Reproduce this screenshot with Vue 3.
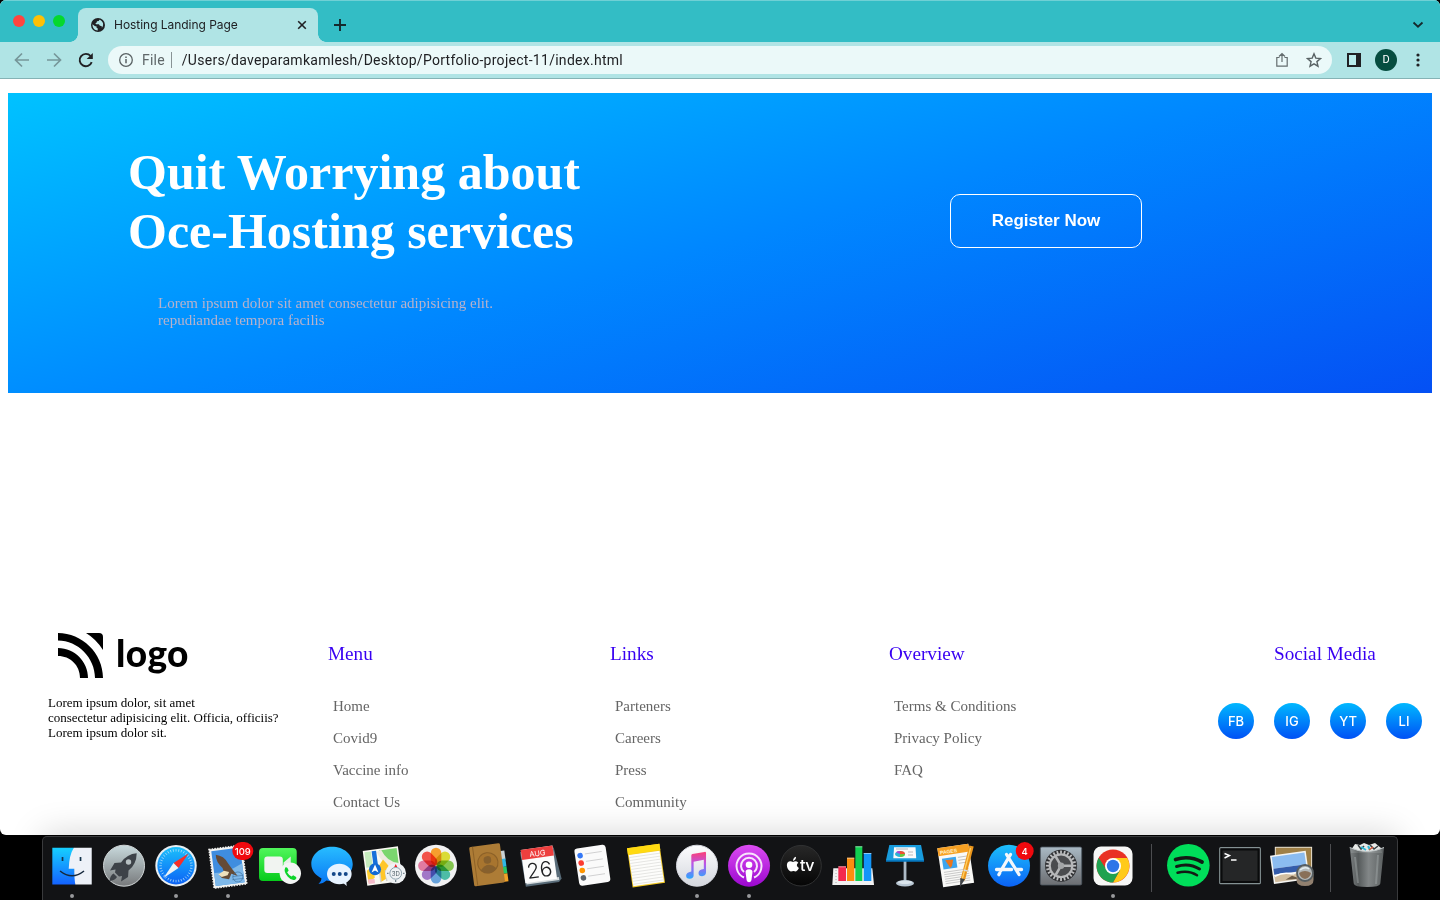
<script setup>
const columns = [
  { title: 'Menu', items: ['Home', 'Covid9', 'Vaccine info', 'Contact Us'] },
  { title: 'Links', items: ['Parteners', 'Careers', 'Press', 'Community'] },
  { title: 'Overview', items: ['Terms & Conditions', 'Privacy Policy', 'FAQ'] },
]
const socials = ['FB', 'IG', 'YT', 'LI']
const petals = ['#f7981d', '#d8d926', '#7cc242', '#3fb8a0', '#5b9bd9', '#9a6cc4', '#e0709a', '#f2453d']
const ticks = Array.from({ length: 36 }, (_, i) => i * 10)
const teeth = Array.from({ length: 24 }, (_, i) => i * 15)
const dotColors = ['#3478f6', '#fb3b30', '#ff9500', '#5b626a']
</script>

<template>
  <div class="desktop">
    <div class="window">
      <header class="tabstrip">
        <div class="lights"><i class="red"></i><i class="yellow"></i><i class="green"></i></div>
        <div class="tab">
          <svg class="globe" width="14" height="14" viewBox="0 0 14 14"><circle cx="7" cy="7" r="7" fill="#202124"/><path d="M1.5 6.2 4 8.2l1.4.1.3 1.6 1 .4v2.2C3.600 12.300 1.300 9.900 1.500 6.200ZM8.300 1.700 7.800 3 6 3.300 5.500 4.700 4.400 5.300 5 6.300h2.900l1 1.500 1.700.2.300 1.800c2.100-2.600 1.700-6.800-2.600-8.100Z" fill="#b0e4e5"/></svg>
          <span class="tabname">Hosting Landing Page</span>
          <svg width="10" height="10" viewBox="0 0 10 10"><path d="M1.200 1.200 8.800 8.800M8.800 1.200 1.200 8.800" stroke="#202124" stroke-width="1.600"/></svg>
        </div>
        <svg class="plus" width="12" height="12" viewBox="0 0 12 12"><path d="M6 0v12M0 6h12" stroke="#15292c" stroke-width="1.900"/></svg>
        <svg class="chevron" width="12" height="8" viewBox="0 0 12 8"><path d="M1.500 1.500 6 5.700l4.500-4.200" fill="none" stroke="#15292c" stroke-width="1.800"/></svg>
      </header>
      <div class="toolbar">
        <svg class="nav" width="16" height="16" viewBox="0 0 16 16"><path d="M15 8H2M8 1.500 1.500 8 8 14.500" fill="none" stroke="#769699" stroke-width="1.700"/></svg>
        <svg class="nav" width="16" height="16" viewBox="0 0 16 16"><path d="M1 8h13M8 1.500 14.500 8 8 14.500" fill="none" stroke="#769699" stroke-width="1.700"/></svg>
        <svg class="nav" width="16" height="16" viewBox="0 0 16 16"><path d="M13.700 10.200A6.200 6.200 0 1 1 12.600 4" fill="none" stroke="#202124" stroke-width="1.900"/><path d="M14.800 1v6H8.700Z" fill="#202124"/></svg>
        <div class="omnibox">
          <svg width="14" height="14" viewBox="0 0 14 14"><circle cx="7" cy="7" r="6.300" fill="none" stroke="#5a6264" stroke-width="1.300"/><path d="M7 6v4.300M7 3.500v1.500" stroke="#5a6264" stroke-width="1.500"/></svg>
          <span class="scheme">File</span><i class="bar"></i><span class="url">/Users/daveparamkamlesh/Desktop/Portfolio-project-11/index.html</span>
          <svg class="share" width="14" height="16" viewBox="0 0 14 16"><path d="M4.500 5.500H1.800v8.700h10.400V5.500H9.500M7 10V1.800M4 4.500l3-3 3 3" fill="none" stroke="#646d6f" stroke-width="1.200"/></svg>
          <svg width="16" height="16" viewBox="0 0 16 16"><path d="m8 1.800 1.800 4.300 4.700.4-3.600 3.100 1.100 4.600L8 11.800l-4 2.400 1.100-4.600L1.500 6.500l4.700-.4Z" fill="none" stroke="#596365" stroke-width="1.400"/></svg>
        </div>
        <svg class="panel" width="14" height="14" viewBox="0 0 14 14"><path fill="#202124" d="M0 0h14v14H0Z"/><path fill="#b9ecec" d="M2 2h7v10H2Z"/></svg>
        <span class="avatar">D</span>
        <svg class="kebab" width="4" height="14" viewBox="0 0 4 14"><g fill="#202124"><circle cx="2" cy="2" r="1.600"/><circle cx="2" cy="7" r="1.600"/><circle cx="2" cy="12" r="1.600"/></g></svg>
      </div>

      <main>
        <section class="hero">
          <div class="copy">
            <h1>Quit Worrying about<br><span>Oce-Hosting services</span></h1>
            <p>Lorem ipsum dolor sit amet consectetur adipisicing elit.<br>repudiandae tempora facilis</p>
          </div>
          <button>Register Now</button>
        </section>
        <footer>
          <div class="brand">
            <div class="logo">
              <svg width="45" height="45" viewBox="0 0 45 45"><path d="M28 0h13q4 0 4 4v13Q38 6 28 0ZM0 0c24 0 45 20 45 45h-8C37 25 20 7.500 0 7.500ZM0 15c17 0 30 14 30 30h-8C22 32 12 23 0 23Z"/></svg>
              <span>logo</span>
            </div>
            <p>Lorem ipsum dolor, sit amet<br>consectetur adipisicing elit. Officia, officiis?<br>Lorem ipsum dolor sit.</p>
          </div>
          <div v-for="c in columns" :key="c.title" class="col">
            <h3>{{ c.title }}</h3>
            <ul><li v-for="i in c.items" :key="i">{{ i }}</li></ul>
          </div>
          <div class="social">
            <h3>Social Media</h3>
            <div class="circles"><span v-for="s in socials" :key="s">{{ s }}</span></div>
          </div>
        </footer>
      </main>
    </div>

    <nav class="dock">
      <svg class="defs" width="0" height="0"><defs>
        <linearGradient id="gBlue" x2="0" y2="1"><stop stop-color="#16d0ff"/><stop offset="1" stop-color="#1462ff"/></linearGradient>
        <linearGradient id="gSky" x2="0" y2="1"><stop stop-color="#1cc0fb"/><stop offset="1" stop-color="#0b62f6"/></linearGradient>
        <linearGradient id="gGrey" x2="0" y2="1"><stop stop-color="#c9dadd"/><stop offset="1" stop-color="#77797b"/></linearGradient>
        <linearGradient id="gWhite" x2="0" y2="1"><stop stop-color="#fdfdfe"/><stop offset="1" stop-color="#d4d7de"/></linearGradient>
        <linearGradient id="gGreen" x2="0" y2="1"><stop stop-color="#50f65b"/><stop offset="1" stop-color="#06cb1b"/></linearGradient>
        <linearGradient id="gMsg" x2="0" y2="1"><stop stop-color="#28bdff"/><stop offset="1" stop-color="#0877f5"/></linearGradient>
        <linearGradient id="gNote" x2="0" y2="1"><stop stop-color="#fc3f75"/><stop offset=".45" stop-color="#ba55e9"/><stop offset="1" stop-color="#29a7ff"/></linearGradient>
        <linearGradient id="gPod" x2="0" y2="1"><stop stop-color="#dc4cf2"/><stop offset="1" stop-color="#9b08cf"/></linearGradient>
        <linearGradient id="gTv" x2="0" y2="1"><stop stop-color="#282828"/><stop offset="1" stop-color="#050505"/></linearGradient>
        <linearGradient id="gSet" x2="0" y2="1"><stop stop-color="#a9b9c4"/><stop offset="1" stop-color="#6c6e72"/></linearGradient>
        <linearGradient id="gCan"><stop stop-color="#858a8b"/><stop offset=".25" stop-color="#5c6162"/><stop offset=".55" stop-color="#8c9192"/><stop offset="1" stop-color="#626768"/></linearGradient>
      </defs></svg>

      <!-- Finder -->
      <svg class="app" viewBox="0 0 52 62"><path fill="url(#gBlue)" d="M6.300 9.700h21.500l1.500 36.800h-23Z"/><path fill="#edf1f8" d="M27.800 9.700h17.900v36.800H29.300q-1-5-1.100-15.700h-5.500q.3-13.500 5.100-21.100Z"/><path d="M16.500 19v4M34.500 19v4" stroke="#15344d" stroke-width="1.700"/><path d="M14 33q12 9.500 24 0" fill="none" stroke="#16283d" stroke-width="1.500"/><circle class="run" cx="26" cy="58" r="2"/></svg>
      <!-- Launchpad -->
      <svg class="app" viewBox="0 0 52 62"><circle cx="26" cy="27.700" r="20.500" fill="url(#gGrey)" stroke="#d0d5d6"/><path fill="#3d4248" d="M38.700 15.300Q29 16 23 24.500l-6.500.500-4.500 7.500 5.500-1-.5 3 4 4 3-.5-1 5.500 7-4.500.5-6.500q8-6 8.200-17.200ZM15.500 35.500q-3.500 2-4 7.500 5.500-.5 7.500-4Z"/><circle cx="30.500" cy="24" r="2.700" fill="#b7c0c2"/></svg>
      <!-- Safari -->
      <svg class="app" viewBox="0 0 52 62"><circle cx="26" cy="27.700" r="20.700" fill="#e8eef1"/><circle cx="26" cy="27.700" r="18.700" fill="url(#gSky)"/><path v-for="t in ticks" :key="t" d="M26 11v2.500" stroke="#b9e2fa" stroke-width=".7" :transform="`rotate(${t} 26 27.700)`"/><path fill="#f82e28" d="M38.500 15.500 23.500 25l5 5Z"/><path fill="#eef2f4" d="M13.500 40 23.500 25l5 5Z"/><circle class="run" cx="26" cy="58" r="2"/></svg>
      <!-- Mail -->
      <svg class="app" viewBox="0 0 52 62"><g transform="translate(7 11.500) rotate(-7.500)"><rect width="33" height="39" fill="#f3f3f1" stroke="#f3f3f1" stroke-width="1.600" stroke-dasharray="1.500 1.200"/><rect x="2" y="2" width="29" height="35" fill="#3f8ddf"/><path d="M2 24q12 2 29-6v19H2Z" fill="#7eb8e9"/><path d="M6 6q8 2 11 10 3 6 8 14l-6-3-3 5-7-2-2-3 5-2-1-5q-6-7-5-14Z" fill="#654b37"/><path d="m6 26 6-3 5 2-2 3-6 1Z" fill="#eee0bd"/><circle cx="25" cy="31" r="5" fill="none" stroke="#376b9c" stroke-width=".6"/><path d="M20 30h10M19 33h12" stroke="#376b9c" stroke-width=".5"/></g><rect x="30.300" y="4" width="21" height="18" rx="9" fill="#f0090e"/><text x="40.800" y="16.600" class="badge">109</text><circle class="run" cx="26" cy="58" r="2"/></svg>
      <!-- FaceTime -->
      <svg class="app" viewBox="0 0 52 62"><rect x="5" y="10" width="37.700" height="33" rx="4" fill="url(#gGreen)"/><rect x="10.300" y="18.500" width="18.500" height="16.500" rx="3" fill="#f1f4f1"/><path d="m29.500 24.500 7.200-6v16l-7.200-5Z" fill="#e8eee8"/><circle cx="36.300" cy="35.300" r="10.700" fill="#f3f5f4"/><path d="M31.200 29.500q2-1 2.800 1.500l.6 1.700-1.500 1.600q1.600 3 4.500 4.300l1.500-1.400 3 1.700q1 1-1 2.800-3.100 1.600-7.300-3-4.500-5-2.600-9.200Z" fill="#0ed42c"/></svg>
      <!-- Messages -->
      <svg class="app" viewBox="0 0 52 62"><path fill="url(#gMsg)" d="M26 8.700c11.500 0 20.700 7.500 20.700 17.300S37.500 43.300 26 43.300q-3 0-5.500-.8-3 3-8 3.500 3-2.500 3-5.500C9 37 5.300 32 5.300 26 5.300 16.200 14.500 8.700 26 8.700Z"/><ellipse cx="33.300" cy="36" rx="12.300" ry="10.300" fill="#e8f3ff"/><path d="m36 44 4.700 4-.5-5Z" fill="#e8f3ff"/><g fill="#14488a"><circle cx="27.700" cy="36" r="2"/><circle cx="33.700" cy="36" r="2"/><circle cx="39.700" cy="36" r="2"/></g></svg>
      <!-- Maps -->
      <svg class="app" viewBox="0 0 52 62"><g transform="translate(4.700 13) rotate(-7.500)"><rect width="35.500" height="35" fill="#faf9f2"/><path d="M1.500 1.500H8V17H1.500Z" fill="#c6ebbd"/><path d="M16 1.500h18v19l-9-3q-8-5-9-16Z" fill="#7bd66f"/><path d="M16 2q5 15 18 17" fill="none" stroke="#eeeae0" stroke-width="5"/><path d="m1.500 20 7-4v12l-7 4Z" fill="#ffcf31"/><path d="m14 17 5-6 6 9-4 10-7 3Z" fill="#ffc629"/><path d="M1.500 29H8v4.500H1.500Z" fill="#f6bccb"/><path d="M11 1.500V23" stroke="#1770da" stroke-width="4.500"/><path d="M14 24v9.500M20 22v11" stroke="#d5d5cf" stroke-width="1.500"/></g><circle cx="17" cy="31.300" r="6" fill="#1269d3"/><path d="m17 26.500 3.500 8-3.500-2-3.500 2Z" fill="#fff"/><circle cx="37.700" cy="35.300" r="10.300" fill="#eff2f4"/><circle cx="37.700" cy="35.300" r="5.900" fill="none" stroke="#748b99" stroke-width=".8"/><text x="37.700" y="37.500" class="threeD">3D</text><path d="m37.700 26-1.500 3h3Z" fill="#ef2328"/><path d="M37.700 42v2M29 35.300h1.500M45 35.300h1.500" stroke="#536773"/></svg>
      <!-- Photos -->
      <svg class="app" viewBox="0 0 52 62"><circle cx="26" cy="27.700" r="21" fill="#f1f1f2"/><g class="petals"><rect v-for="(p, n) in petals" :key="p" x="20.700" y="9.800" width="10.600" height="17.500" rx="5.300" :fill="p" :transform="`rotate(${n * 45} 26 27.700)`"/></g></svg>
      <!-- Contacts -->
      <svg class="app" viewBox="0 0 52 62"><g transform="translate(7 9.300) rotate(-7.800)"><rect x="27" y="8" width="7.500" height="9" fill="#c9d1d4"/><rect x="27" y="16" width="7.500" height="8" fill="#31b8e6"/><rect x="27" y="24" width="7.500" height="7" fill="#29c765"/><rect x="27" y="31" width="7.500" height="8" fill="#f3a226"/><rect width="31" height="39.500" rx="1.500" fill="#ad7c36"/><path d="M3.500 0v39" stroke="#8e6227"/><circle cx="16.500" cy="18" r="10.200" fill="#a8752f" stroke="#8c6128"/><circle cx="16.500" cy="15" r="3.800" fill="#87602d"/><path d="M8.500 24.500q8-9 16 0-8 8-16 0Z" fill="#87602d"/></g></svg>
      <!-- Calendar -->
      <svg class="app" viewBox="0 0 52 62"><g transform="translate(6.700 12) rotate(-8)"><path d="M-1 2h34l3.500 32-3 3H0Z" fill="#586b78"/><path d="M1 32h33v3H1Z" fill="#d6dcde"/><rect width="32" height="33.500" fill="#fcfcfc"/><path d="M0 0h32v10H0Z" fill="#ed3f3e"/><text x="16" y="8.300" class="month">AUG</text><text x="15.800" y="29.800" class="day">26</text></g></svg>
      <!-- Reminders -->
      <svg class="app" viewBox="0 0 52 62"><g transform="translate(8 11) rotate(-8.500)"><rect width="31.500" height="37.500" rx="3" fill="#fafafa"/><g v-for="(c, n) in dotColors" :key="c"><circle cx="5" :cy="7.500 + n * 7.500" r="2.800" :fill="c"/><path :d="`M10 ${6.500 + n * 7.500}h17`" stroke="#c9c9ca" stroke-width=".8"/></g></g></svg>
      <!-- Notes -->
      <svg class="app" viewBox="0 0 52 62"><g transform="translate(8 10.300) rotate(-8.200)"><rect width="32.700" height="39.500" fill="#f2c925"/><path d="M.800 7h31v31.500h-31Z" fill="#fdfdfb"/><path d="M0 0h32.700v6.500H0Z" fill="#ffda11"/><path v-for="n in 10" :key="n" :d="`M1 ${6.500 + n * 3}h31`" stroke="#d8d8d4" stroke-width=".6"/></g></svg>
      <!-- Music -->
      <svg class="app" viewBox="0 0 52 62"><circle cx="26" cy="27.700" r="20.500" fill="url(#gWhite)" stroke="#d7d9e0"/><path fill="url(#gNote)" d="M20.300 17.500q0-1.200 1.200-1.400l12-2.200q1.500-.3 1.500 1.300v19q0 3.500-4 4-3.500 0-3.500-3.200 0-3.300 5.300-4V21.800l-10.200 2v13.700q0 2.900-4 3.200-3.600 0-3.500-3.200 0-3 5.200-4Z"/><circle class="run" cx="26" cy="58" r="2"/></svg>
      <!-- Podcasts -->
      <svg class="app" viewBox="0 0 52 62"><circle cx="26" cy="27.700" r="21" fill="url(#gPod)"/><g fill="none" stroke="#f7e6fb" stroke-width="2"><path d="M21 39.500a12.500 12.500 0 1 1 10 0"/><path d="M21 34a8 8 0 1 1 10 0"/></g><circle cx="26" cy="26.700" r="3.300" fill="#fff"/><path d="M26 31.300q4 0 3.400 3.500l-1 7.500q-.5 2-2.400 2t-2.400-2l-1-7.500q-.6-3.500 3.400-3.500Z" fill="#fff"/><circle class="run" cx="26" cy="58" r="2"/></svg>
      <!-- Apple TV -->
      <svg class="app" viewBox="0 0 52 62"><circle cx="26" cy="27.700" r="20.300" fill="url(#gTv)" stroke="#303132"/><path fill="#fff" d="M18 24q3-1.800 5.300.7-3.300 2.500.6 5.400-1.300 3-3 3.500l-2.500-.6-2.500.6c-2.800-.5-5.300-6-3.300-9q2-2.300 5.400-.6ZM18 23q0-3.300 3-4.200 0 3.300-3 4.200Z"/><text x="24.900" y="33" class="tv">tv</text></svg>
      <!-- Numbers -->
      <svg class="app" viewBox="0 0 52 62"><path fill="#f1f1f1" d="M6.300 30.300h39L47 47H5.300Z"/><path d="M9 32v13" stroke="#a9a9a9" stroke-dasharray="1 2"/><path fill="#f4294e" d="M11.300 28.300H19V43h-7.700Z"/><path fill="#fb8d10" d="M20 19.700h7.300V43H20Z"/><path fill="#12cf50" d="M28.300 8.300h7V43h-7Z"/><path fill="#1295f8" d="M36.700 15h7.600v28h-7.600Z"/><path d="M11.300 28.800H19M20 20.200h7.300M28.300 8.800h7M36.700 15.500h7.600" stroke="#fff" stroke-opacity=".5"/></svg>
      <!-- Keynote -->
      <svg class="app" viewBox="0 0 52 62"><path d="M26 23v21" stroke="#aebbc7" stroke-width="2.800"/><ellipse cx="26" cy="45.300" rx="9" ry="3.200" fill="#b9c7d3"/><ellipse cx="26" cy="44.300" rx="7" ry="1.800" fill="#dbe5ec"/><path fill="#189cdd" d="M10.300 7H42l3 15H7Z"/><path fill="#077ac2" d="M7 22h38v1.700H7Z"/><path fill="#fafafa" d="M15 9.300h21.500l.7 11H14.300Z"/><ellipse cx="21" cy="16" rx="5" ry="3" fill="#29b7d5"/><path d="M21 16v-3q5 0 5 3Z" fill="#f0522f"/><path d="M21 16h5q0 3-5 3Z" fill="#69c83d"/><path d="m21 16-4-1.700q1-1.300 4-1.300Z" fill="#b941d0"/><path d="M17 11h12M29 14h5M29 17h5" stroke="#a8a8a8" stroke-width=".8"/></svg>
      <!-- Pages -->
      <svg class="app" viewBox="0 0 52 62"><g transform="translate(6.300 10.300) rotate(-8.500)"><rect width="31.300" height="39.500" fill="#f9f9f7"/><path fill="#f6a023" d="M0 0h31.300v8H0Z"/><text x="2" y="6.500" class="pages">PAGES</text><rect x="3" y="11" width="14" height="11" fill="#3ca5ee"/><path d="m6 13 8 .5-2 6-2 2Z" fill="#ea771c"/><path v-for="n in 6" :key="n" :d="`M3 ${22.500 + n * 2.300}h25`" stroke="#b7b7b7" stroke-width=".7"/><path d="M19 12h9M19 15h8M19 18h9" stroke="#b0b0b0" stroke-width=".7"/></g><path d="M40.500 8 31.700 42" stroke="#ec961b" stroke-width="4.500"/><path d="M39.500 10 31 42" stroke="#ffd064" stroke-width="1.300"/><path d="m29.300 40 4.600 1.200-5 8Z" fill="#414447"/><path d="m32.500 32 4 1" stroke="#d7dadc" stroke-width="1.500"/></svg>
      <!-- App Store -->
      <svg class="app" viewBox="0 0 52 62"><circle cx="26" cy="27.700" r="21" fill="url(#gSky)"/><g stroke="#f4f7fb" stroke-linecap="round" stroke-width="3.300"><path d="M27.500 16.500 18 32.500M23.500 16.500l12.500 20M13.500 31.500h15M34 31.500h4.500M16.800 35l-1 1.700"/></g><circle cx="41.700" cy="13" r="9" fill="#f0090e"/><text x="41.700" y="16.700" class="badge">4</text></svg>
      <!-- System Preferences -->
      <svg class="app" viewBox="0 0 52 62"><rect x="5.300" y="9" width="41.400" height="38" rx="1.500" fill="url(#gSet)" stroke="#4c5660" stroke-width=".8"/><circle cx="26" cy="27.700" r="16" fill="#2f3033"/><path v-for="t in teeth" :key="t" d="M26 12.500v3.200" stroke="#bcbdbf" stroke-width="1.800" :transform="`rotate(${t} 26 27.700)`"/><circle cx="26" cy="27.700" r="11.300" fill="#4b4c4f" stroke="#b8b9bb" stroke-width="2.200"/><g stroke="#b4b5b7" stroke-width="2.500"><path d="M26 27.700h11.300M26 27.700 20.300 18M26 27.700 20.300 37.500"/></g><circle cx="26" cy="27.700" r="3.200" fill="#a3a5a7"/></svg>
      <!-- Chrome -->
      <svg class="app" viewBox="0 0 52 62"><rect x="6.500" y="8.500" width="39" height="39" rx="7.500" fill="#f7f7f6"/><circle cx="26" cy="28" r="16.500" fill="#e93125"/><path d="M26 20h14.300A16.500 16.500 0 0 1 26 44.500l7-12.500Z" fill="#ffca19"/><path d="M11.700 19.800A16.500 16.500 0 0 0 26 44.500L33 32l-7 3-7-4Z" fill="#1fa250"/><circle cx="26" cy="28" r="8" fill="#fff"/><circle cx="26" cy="28" r="6.200" fill="#2f76e8"/><circle class="run" cx="26" cy="58" r="2"/></svg>

      <i class="sep"></i>

      <!-- Spotify -->
      <svg class="app" viewBox="0 0 52 62"><circle cx="26.300" cy="27.300" r="21.300" fill="#00de5a"/><g fill="none" stroke="#131a15" stroke-linecap="round"><path d="M13.500 21.500Q27 17 40 24" stroke-width="3.700"/><path d="M14.500 28.500Q27 24.500 37.500 31" stroke-width="3"/><path d="M15.500 34.700q11-3 19.500 2.500" stroke-width="2.500"/></g></svg>
      <!-- Terminal -->
      <svg class="app" viewBox="0 0 52 62"><rect x="5.700" y="9.700" width="40.600" height="36" rx="1" fill="#252627" stroke="#849193" stroke-width="1.200"/><rect x="7.500" y="11.500" width="37" height="32.500" fill="none" stroke="#0a0b0c" stroke-width="2"/><path d="m10.500 15.500 5 2-5 2.500M17 22h5.500" fill="none" stroke="#fff" stroke-width="1.400"/></svg>
      <!-- Preview -->
      <svg class="app" viewBox="0 0 52 62"><rect x="9.300" y="9.300" width="36.300" height="27" fill="#9f8047" stroke="#eee6d5"/><g transform="translate(4 17.700) rotate(-8)"><rect width="36" height="28.500" fill="#f5f5f2"/><path fill="#8bbcf0" d="M1.500 1.500h33v12h-33Z"/><path fill="#345caa" d="M1.500 13.500h33v6h-33Z"/><path fill="#d2bea0" d="m1.500 21 10-2 9 3 14-5v10h-33Z"/><path d="M2 21q8-3 17 0" fill="none" stroke="#fff" stroke-width="1.500"/><path d="m12 26 7-3 8 4Z" fill="#6f5d48"/></g><path d="M30.500 36v6q0 6 8.500 6t8.500-6v-6Z" fill="#91806f"/><circle cx="39" cy="35" r="8" fill="#b4b9b9" stroke="#565e61" stroke-width="1.800"/><path d="M33 35q6-4 12 0-1 5-6 6-5-1-6-6Z" fill="#897058"/><path d="M34 32q5-4 9-1" fill="none" stroke="#e4edf1" stroke-width="1.500"/></svg>

      <i class="sep"></i>

      <!-- Trash -->
      <svg class="app" viewBox="0 0 52 62"><path d="m10 12 4-6 5 1 4-2 5 2 6-2 6 5 1 5H10Z" fill="#e7e9e7"/><path d="m17 7 3 4 3-3M29 7l4 4 4-3" stroke="#384043" fill="none" stroke-width="1.500"/><path d="m20 9 5 3M27 8l2 4" stroke="#2fb8d4" stroke-width="2"/><path d="m32 9-4 3" stroke="#d95737" stroke-width="1.500"/><path fill="url(#gCan)" fill-opacity=".92" d="M8.700 9.500q17 8 34.300 0l-3.700 36q-.3 3.500-13.300 3.500t-13.300-3.500Z"/><path d="M8.700 9.500q17 8 34.300 0" fill="none" stroke="#c2c8c9"/><path d="m14 19 3 26M37 17l-2 29" stroke="#b7bdbe" stroke-opacity=".35" stroke-width="2"/></svg>
    </nav>
  </div>
</template>

<style>
html, body { margin: 0; background: #000; overflow: hidden; }
</style>

<style scoped>
* { box-sizing: border-box; }
.desktop { width: 1440px; height: 900px; background: #000; overflow: hidden; font-family: "Liberation Serif", serif; }
.window { height: 835px; border-radius: 6px; background: #fff; overflow: hidden; display: flex; flex-direction: column; }
.tabstrip { height: 42px; background: #33bdc5; border-top: 1px solid #6fd0d5; display: flex; align-items: flex-start; flex: none; }
.lights { display: flex; gap: 8px; padding: 14px 0 0 13px; width: 78px; }
.lights i { width: 12px; height: 12px; border-radius: 50%; }
.red { background: #ff453f; }
.yellow { background: #ffc005; }
.green { background: #05d82d; }
.tab { position: relative; width: 240px; height: 34px; margin-top: 7px; border-radius: 8px 8px 0 0; background: #b0e4e5; display: flex; align-items: center; padding: 0 11px 0 13px; color: #202124; font: 12px Inter, sans-serif; }
.tab::before, .tab::after { content: ""; position: absolute; bottom: 0; width: 8px; height: 8px; }
.tab::before { left: -8px; background: radial-gradient(circle at 0 0, transparent 7.500px, #b0e4e5 8px); }
.tab::after { right: -8px; background: radial-gradient(circle at 100% 0, transparent 7.500px, #b0e4e5 8px); }
.tabname { flex: 1; margin-left: 9px; padding-bottom: 2px; letter-spacing: -.04px; }
.plus { margin: 18px 0 0 16px; }
.chevron { margin: 20px 16px 0 auto; }
.toolbar { height: 37px; flex: none; background: #b0e4e5; border-bottom: 1px solid #85b3b5; display: flex; align-items: center; padding: 0 20px 0 14px; font-family: Roboto, sans-serif; }
.nav { margin-right: 16px; }
.omnibox { width: 1224px; height: 28px; margin-left: -2px; border-radius: 14px; background: #ebf9f9; display: flex; align-items: center; padding: 0 10px 0 11px; color: #202124; font-size: 14px; }
.scheme { color: #5f6769; margin-left: 9px; letter-spacing: .2px; }
.bar { width: 1px; height: 16px; background: #899395; margin: 0 10px 0 6px; }
.url { flex: 1; white-space: nowrap; letter-spacing: .28px; }
.share { margin-right: 17px; }
.panel { margin-left: 15px; }
.avatar { width: 22px; height: 22px; border-radius: 50%; background: #064d40; color: #fff; margin-left: 14px; font-size: 11px; line-height: 22px; text-align: center; }
.kebab { margin-left: 19px; }

main { flex: 1; padding: 14px 8px 0; }
.hero { height: 300px; background: linear-gradient(165deg, #00c2ff, #0087ff 50%, #0450f4); display: flex; padding-left: 120px; }
.copy { width: 822px; color: #fff; }
h1 { margin: 50px 0 0; font-size: 50px; line-height: 59px; white-space: nowrap; }
.copy p { margin: 34px 0 0 30px; color: #b8b2cb; font-size: 15px; line-height: 17px; }
button { width: 192px; height: 54px; margin-top: 101px; background: transparent; border: 1px solid #fff; border-radius: 10px; color: #fff; font: bold 17px "Liberation Sans", sans-serif; padding: 0; }
footer { margin-top: 240px; padding-left: 40px; display: grid; grid-template-columns: 280px 282px 279px 329px 204px; }
.logo { height: 45px; margin-left: 10px; display: flex; }
.logo span { margin: -3px 0 0 13px; font: 900 37px/45px Lato, sans-serif; letter-spacing: .4px; }
.brand p { margin: 17px 0 0; font-size: 13px; line-height: 15px; letter-spacing: -.015px; white-space: nowrap; }
h3 { margin: 9px 0 0; font-size: 19.200px; line-height: 24px; font-weight: 400; color: #3800f2; }
ul { list-style: none; margin: 24px 0 0 5px; padding: 0; }
li { font-size: 15px; line-height: 32px; height: 32px; color: #656565; }
.social h3 { padding-left: 56px; white-space: nowrap; }
.circles { display: flex; gap: 20px; margin-top: 37px; }
.circles span { width: 36px; height: 36px; border-radius: 50%; flex: none; background: linear-gradient(#00b8ff, #0050f5); color: #fff; text-align: center; font: 500 13px/36px Inter, sans-serif; }

.dock { position: relative; width: 1356px; height: 64px; margin: 1px auto 0 42px; padding: 1px 3px 0; display: flex; background: #121315; border: 1px solid #393a3c; border-bottom: 0; border-radius: 5px 5px 0 0; box-shadow: 0 -2px 34px rgba(0, 0, 0, .17); }
.defs { position: absolute; }
.app { width: 52.050px; height: 62px; flex: none; overflow: visible; }
.run { fill: #98999b; }
.sep { width: 23px; height: 48px; margin-top: 6px; flex: none; background: linear-gradient(#4c4d50, #4c4d50) 12px 0 / 1px 100% no-repeat; }
.petals { isolation: isolate; }
.petals rect { mix-blend-mode: multiply; opacity: .92; }
.badge { fill: #fff; font: 500 9.500px Inter, sans-serif; text-anchor: middle; }
.threeD { font: 6px Inter, sans-serif; fill: #4a5962; text-anchor: middle; }
.month { font: 7.500px Inter, sans-serif; fill: #fff; text-anchor: middle; }
.day { font: 300 21px Inter, sans-serif; fill: #202224; text-anchor: middle; }
.tv { font: 500 16px Inter, sans-serif; fill: #fff; letter-spacing: -.5px; }
.pages { font: bold 5px "Liberation Sans", sans-serif; fill: #fff4d2; }
</style>
